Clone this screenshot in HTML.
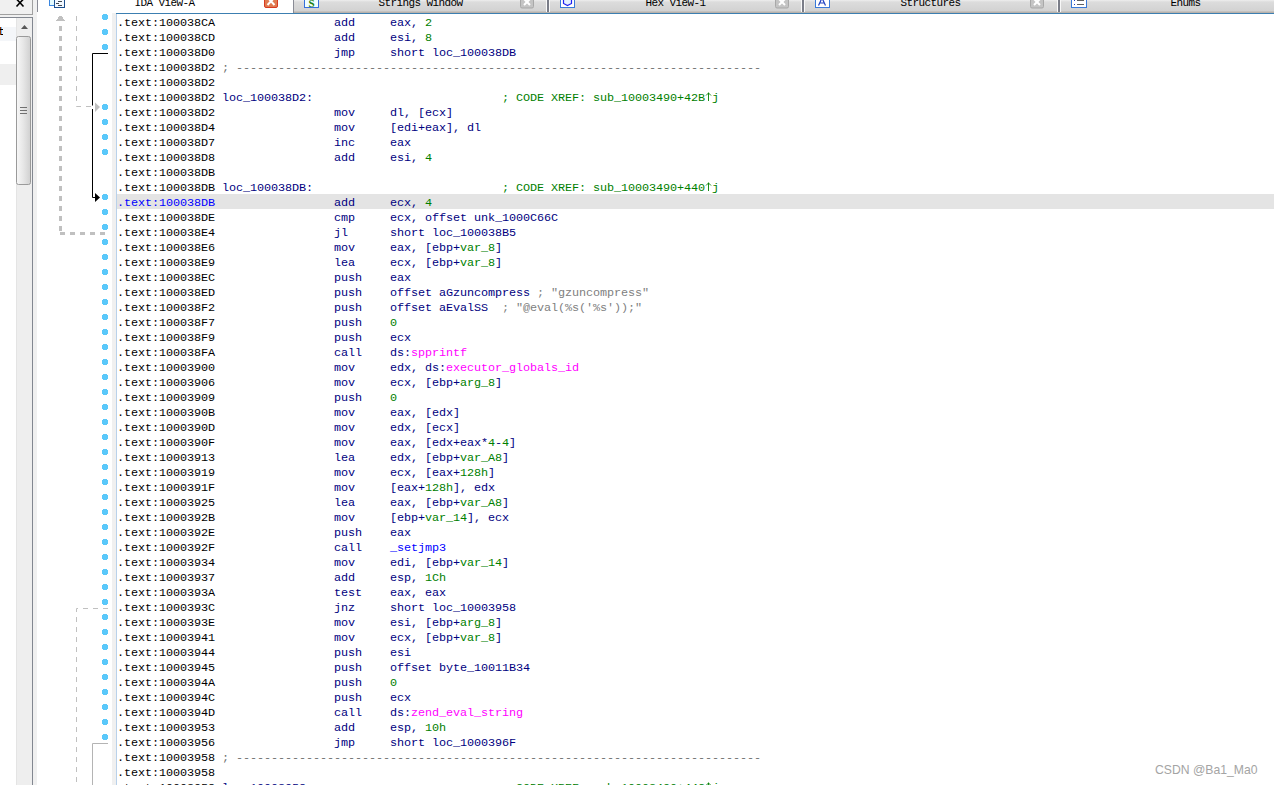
<!DOCTYPE html>
<html><head><meta charset="utf-8"><style>
html,body{margin:0;padding:0;width:1274px;height:785px;overflow:hidden;background:#fff;position:relative}
.abs{position:absolute}
#listing{position:absolute;left:117px;top:0;width:1157px;height:785px;overflow:hidden}
.row{position:absolute;left:0;height:15px;width:1157px;white-space:pre;font-family:"Liberation Mono",monospace;font-size:11.8px;letter-spacing:-0.08px;line-height:15px;color:#000;-webkit-text-stroke-width:0px}
.a{color:#000}
.ah{color:#0000ff}
.n{color:#000080}
.g{color:#008000}
.s{color:#808080}
.m{color:#ff00ff}
.b{color:#0000ff}
.sep{color:#707070}
.tab{position:absolute;top:0;height:13px;box-sizing:border-box;overflow:hidden}
.tabt{position:absolute;top:-4px;left:0;width:100%;text-align:center;font-family:"Liberation Mono",monospace;font-size:11px;letter-spacing:-0.6px;line-height:15px;color:#000}
</style></head><body>
<!-- left panel -->
<div class="abs" style="left:0;top:0;width:37px;height:785px;background:#f0f0f0"></div>
<div class="abs" style="left:0;top:0;width:32px;height:14px;border-right:1px solid #a0a0a0;border-bottom:1px solid #a0a0a0;background:#f0f0f0"></div>
<svg class="abs" style="left:0;top:0" width="32" height="14"><path d="M16.5 -1L23.5 6.5M23.5 -1L16.5 6.5" stroke="#000" stroke-width="1.6"/></svg>
<div class="abs" style="left:0;top:17px;width:32px;height:768px;border-top:1px solid #828790;border-right:1px solid #828790;background:#fff"></div>
<div class="abs" style="left:0;top:27px;width:16px;height:14px;background:#f4f6f9"></div>
<svg class="abs" style="left:0;top:27px" width="4" height="10"><rect x="0" y="0" width="1" height="8" fill="#9a3800"/><rect x="1" y="0" width="1" height="8" fill="#70b8ff"/><rect x="0" y="2" width="3" height="1" fill="#000"/><rect x="1" y="7" width="2" height="1" fill="#000"/></svg>
<div class="abs" style="left:0;top:64px;width:16px;height:21px;background:#efefef"></div>
<div class="abs" style="left:16px;top:18px;width:16px;height:767px;background:#eeeeee;border-left:1px solid #e4e4e4;box-sizing:border-box"></div>
<svg class="abs" style="left:16px;top:18px" width="16" height="170">
<path d="M5 11L8.5 7L12 11Z" fill="#585858"/>
<rect x="0.5" y="18.5" width="14" height="148" rx="2" fill="url(#thumb)" stroke="#9a9a9a"/>
<defs><linearGradient id="thumb" x1="0" x2="1" y1="0" y2="0"><stop offset="0" stop-color="#f8f8f8"/><stop offset="0.5" stop-color="#e6e6e6"/><stop offset="1" stop-color="#d0d0d0"/></linearGradient></defs>
<path d="M4 89.5h7M4 92.5h7M4 95.5h7" stroke="#707070" stroke-width="1"/>
</svg>
<!-- tabs -->
<div class="tab" style="left:37px;width:255px;background:#fff"><div class="tabt">IDA View-A</div></div>
<div class="tab" style="left:293px;width:255px;background:linear-gradient(#eeeeee 0px,#dcdcdc 2px,#d2d2d2 11px,#b8b2ac 12px,#b8b2ac 13px)"><div class="tabt">Strings window</div></div>
<div class="tab" style="left:548px;width:255px;background:linear-gradient(#eeeeee 0px,#dcdcdc 2px,#d2d2d2 11px,#b8b2ac 12px,#b8b2ac 13px)"><div class="tabt">Hex View-1</div></div>
<div class="tab" style="left:803px;width:255px;background:linear-gradient(#eeeeee 0px,#dcdcdc 2px,#d2d2d2 11px,#b8b2ac 12px,#b8b2ac 13px)"><div class="tabt">Structures</div></div>
<div class="tab" style="left:1058px;width:255px;background:linear-gradient(#eeeeee 0px,#dcdcdc 2px,#d2d2d2 11px,#b8b2ac 12px,#b8b2ac 13px)"><div class="tabt">Enums</div></div>
<div class="abs" style="left:37px;top:0;width:1px;height:12px;background:#8a8c96"></div>
<div class="abs" style="left:293px;top:0;width:1px;height:13px;background:#8a8c96"></div>
<div class="abs" style="left:546px;top:0;width:1px;height:12px;background:#fafafa"></div>
<div class="abs" style="left:547px;top:0;width:2px;height:12px;background:#7a7d88"></div>
<div class="abs" style="left:549px;top:0;width:1px;height:12px;background:#f8f8f8"></div>
<div class="abs" style="left:801px;top:0;width:1px;height:12px;background:#fafafa"></div>
<div class="abs" style="left:802px;top:0;width:2px;height:12px;background:#7a7d88"></div>
<div class="abs" style="left:804px;top:0;width:1px;height:12px;background:#f8f8f8"></div>
<div class="abs" style="left:1057px;top:0;width:1px;height:12px;background:#fafafa"></div>
<div class="abs" style="left:1058px;top:0;width:2px;height:12px;background:#7a7d88"></div>
<div class="abs" style="left:1060px;top:0;width:1px;height:12px;background:#f8f8f8"></div>
<!-- tab icons -->
<svg class="abs" style="left:0;top:0" width="1274" height="13">
<rect x="49.5" y="-3" width="6" height="8.5" fill="#e4fbff" stroke="#3a86e0"/>
<rect x="54.5" y="-3" width="10" height="10.5" fill="#f2f8ff" stroke="#1c4f8e"/>
<path d="M58 1.5h4M56 3.5h3M58 5.5h4" stroke="#404850"/>
<rect x="264.5" y="-3" width="13" height="10.5" rx="1.5" fill="#e07a50" stroke="#d83a20"/>
<path d="M267.5 -2.5L274.5 5M274.5 -2.5L267.5 5" stroke="#fff" stroke-width="2" fill="none"/>
<rect x="304.5" y="-3" width="14" height="10.5" fill="#f0feff" stroke="#3570dc"/>
<text x="311.5" y="6.5" text-anchor="middle" font-family="Liberation Serif" font-weight="bold" font-size="11" fill="#208010">S</text>
<rect x="520.5" y="-3" width="13" height="11" rx="1.5" fill="#c4c4c4" stroke="#a8a8a8"/>
<path d="M524 -1L530 5M530 -1L524 5" stroke="#fff" stroke-width="2"/>
<rect x="560.5" y="-3" width="14" height="10.5" fill="#fff" stroke="#3a7ad8"/>
<path d="M563.5 -2V3.5L567.5 5.5L571.5 3.5V-2" fill="#e4f0ff" stroke="#2020f0" stroke-width="1.2"/>
<rect x="775.5" y="-3" width="13" height="11" rx="1.5" fill="#c4c4c4" stroke="#a8a8a8"/>
<path d="M779 -1L785 5M785 -1L779 5" stroke="#fff" stroke-width="2"/>
<rect x="815.5" y="-3" width="14" height="10.5" fill="#fff" stroke="#3a7ad8"/>
<path d="M818.5 5.5L822 -2L825.5 5.5M819.5 3h5" stroke="#2040c0" stroke-width="1.2" fill="none"/>
<rect x="1030.5" y="-3" width="13" height="11" rx="1.5" fill="#c4c4c4" stroke="#a8a8a8"/>
<path d="M1034 -1L1040 5M1040 -1L1034 5" stroke="#fff" stroke-width="2"/>
<rect x="1071.5" y="-3" width="15" height="10.5" fill="#fff" stroke="#3a7ad8"/>
<path d="M1074 0.5h1M1074 4.5h1" stroke="#2040c0"/><path d="M1077 0.5h7M1077 4.5h7" stroke="#606060"/>
</svg>
<!-- arrow panel / listing frame -->
<div class="abs" style="left:37px;top:13px;width:75px;height:772px;background:#fff"></div>
<div class="abs" style="left:112px;top:13px;width:4px;height:772px;background:#f0f0f0"></div>
<div class="abs" style="left:116px;top:13px;width:1px;height:772px;background:#b9d1ea"></div>
<div class="abs" style="left:116px;top:13px;width:1158px;height:1px;background:#3c7fb1"></div>
<div class="abs" style="left:117px;top:194px;width:1157px;height:15px;background:#e4e4e4"></div>
<svg class="abs" style="left:0;top:0" width="1274" height="785" viewBox="0 0 1274 785">
<path d="M103 14h4v1h1v4h-1v1h-4v-1h-1v-4h1z" fill="#5ac8fa"/>
<path d="M103 29h4v1h1v4h-1v1h-4v-1h-1v-4h1z" fill="#5ac8fa"/>
<path d="M103 44h4v1h1v4h-1v1h-4v-1h-1v-4h1z" fill="#5ac8fa"/>
<path d="M103 104h4v1h1v4h-1v1h-4v-1h-1v-4h1z" fill="#5ac8fa"/>
<path d="M103 119h4v1h1v4h-1v1h-4v-1h-1v-4h1z" fill="#5ac8fa"/>
<path d="M103 134h4v1h1v4h-1v1h-4v-1h-1v-4h1z" fill="#5ac8fa"/>
<path d="M103 149h4v1h1v4h-1v1h-4v-1h-1v-4h1z" fill="#5ac8fa"/>
<path d="M103 194h4v1h1v4h-1v1h-4v-1h-1v-4h1z" fill="#5ac8fa"/>
<path d="M103 209h4v1h1v4h-1v1h-4v-1h-1v-4h1z" fill="#5ac8fa"/>
<path d="M103 224h4v1h1v4h-1v1h-4v-1h-1v-4h1z" fill="#5ac8fa"/>
<path d="M103 239h4v1h1v4h-1v1h-4v-1h-1v-4h1z" fill="#5ac8fa"/>
<path d="M103 254h4v1h1v4h-1v1h-4v-1h-1v-4h1z" fill="#5ac8fa"/>
<path d="M103 269h4v1h1v4h-1v1h-4v-1h-1v-4h1z" fill="#5ac8fa"/>
<path d="M103 284h4v1h1v4h-1v1h-4v-1h-1v-4h1z" fill="#5ac8fa"/>
<path d="M103 299h4v1h1v4h-1v1h-4v-1h-1v-4h1z" fill="#5ac8fa"/>
<path d="M103 314h4v1h1v4h-1v1h-4v-1h-1v-4h1z" fill="#5ac8fa"/>
<path d="M103 329h4v1h1v4h-1v1h-4v-1h-1v-4h1z" fill="#5ac8fa"/>
<path d="M103 344h4v1h1v4h-1v1h-4v-1h-1v-4h1z" fill="#5ac8fa"/>
<path d="M103 359h4v1h1v4h-1v1h-4v-1h-1v-4h1z" fill="#5ac8fa"/>
<path d="M103 374h4v1h1v4h-1v1h-4v-1h-1v-4h1z" fill="#5ac8fa"/>
<path d="M103 389h4v1h1v4h-1v1h-4v-1h-1v-4h1z" fill="#5ac8fa"/>
<path d="M103 404h4v1h1v4h-1v1h-4v-1h-1v-4h1z" fill="#5ac8fa"/>
<path d="M103 419h4v1h1v4h-1v1h-4v-1h-1v-4h1z" fill="#5ac8fa"/>
<path d="M103 434h4v1h1v4h-1v1h-4v-1h-1v-4h1z" fill="#5ac8fa"/>
<path d="M103 449h4v1h1v4h-1v1h-4v-1h-1v-4h1z" fill="#5ac8fa"/>
<path d="M103 464h4v1h1v4h-1v1h-4v-1h-1v-4h1z" fill="#5ac8fa"/>
<path d="M103 479h4v1h1v4h-1v1h-4v-1h-1v-4h1z" fill="#5ac8fa"/>
<path d="M103 494h4v1h1v4h-1v1h-4v-1h-1v-4h1z" fill="#5ac8fa"/>
<path d="M103 509h4v1h1v4h-1v1h-4v-1h-1v-4h1z" fill="#5ac8fa"/>
<path d="M103 524h4v1h1v4h-1v1h-4v-1h-1v-4h1z" fill="#5ac8fa"/>
<path d="M103 539h4v1h1v4h-1v1h-4v-1h-1v-4h1z" fill="#5ac8fa"/>
<path d="M103 554h4v1h1v4h-1v1h-4v-1h-1v-4h1z" fill="#5ac8fa"/>
<path d="M103 569h4v1h1v4h-1v1h-4v-1h-1v-4h1z" fill="#5ac8fa"/>
<path d="M103 584h4v1h1v4h-1v1h-4v-1h-1v-4h1z" fill="#5ac8fa"/>
<path d="M103 599h4v1h1v4h-1v1h-4v-1h-1v-4h1z" fill="#5ac8fa"/>
<path d="M103 614h4v1h1v4h-1v1h-4v-1h-1v-4h1z" fill="#5ac8fa"/>
<path d="M103 629h4v1h1v4h-1v1h-4v-1h-1v-4h1z" fill="#5ac8fa"/>
<path d="M103 644h4v1h1v4h-1v1h-4v-1h-1v-4h1z" fill="#5ac8fa"/>
<path d="M103 659h4v1h1v4h-1v1h-4v-1h-1v-4h1z" fill="#5ac8fa"/>
<path d="M103 674h4v1h1v4h-1v1h-4v-1h-1v-4h1z" fill="#5ac8fa"/>
<path d="M103 689h4v1h1v4h-1v1h-4v-1h-1v-4h1z" fill="#5ac8fa"/>
<path d="M103 704h4v1h1v4h-1v1h-4v-1h-1v-4h1z" fill="#5ac8fa"/>
<path d="M103 719h4v1h1v4h-1v1h-4v-1h-1v-4h1z" fill="#5ac8fa"/>
<path d="M103 734h4v1h1v4h-1v1h-4v-1h-1v-4h1z" fill="#5ac8fa"/>
<path d="M59 16h3v1h1v2h1v1h1v1h-9v-1h1v-1h1v-2h1z" fill="#c0c0c0"/>
<path d="M60.5 26V232" stroke="#c0c0c0" stroke-width="3" stroke-dasharray="5 5" fill="none"/>
<path d="M60 233.5H105" stroke="#c0c0c0" stroke-width="3" stroke-dasharray="5 5" fill="none"/>
<path d="M108 53.5H92.5V105.5M92.5 109V197.5H95" stroke="#000" stroke-width="1" fill="none"/>
<path d="M95 193L100 197.5L95 202Z" fill="#000"/>
<path d="M76.5 16V106.5H95" stroke="#c0c0c0" stroke-width="1" stroke-dasharray="5 5" fill="none"/>
<path d="M95 102.5L100 107L95 112Z" fill="#c0c0c0"/>
<path d="M108 608.5H76.5V785" stroke="#c0c0c0" stroke-width="1" stroke-dasharray="5 5" stroke-dashoffset="0" fill="none"/>
<path d="M108 743.5H92.5V785" stroke="#b4b4b4" stroke-width="1" fill="none"/>
<path d="M708.5 92.5V101M706 95.5L708.5 93L711 95.5" stroke="#008000" stroke-width="0.9" fill="none"/>
<path d="M708.5 182.5V191M706 185.5L708.5 183L711 185.5" stroke="#008000" stroke-width="0.9" fill="none"/>
<path d="M708.5 782.5V791M706 785.5L708.5 783L711 785.5" stroke="#008000" stroke-width="0.9" fill="none"/>
</svg>
<div id="listing">
<div class="row" style="top:16px"><span class="a">.text:100038CA</span>                 <span class="n">add</span>     <span class="n">eax, </span><span class="g">2</span></div>
<div class="row" style="top:31px"><span class="a">.text:100038CD</span>                 <span class="n">add</span>     <span class="n">esi, </span><span class="g">8</span></div>
<div class="row" style="top:46px"><span class="a">.text:100038D0</span>                 <span class="n">jmp</span>     <span class="n">short loc_100038DB</span></div>
<div class="row" style="top:61px"><span class="a">.text:100038D2</span> <span class="sep">; ---------------------------------------------------------------------------</span></div>
<div class="row" style="top:76px"><span class="a">.text:100038D2</span></div>
<div class="row" style="top:91px"><span class="a">.text:100038D2</span> <span class="n">loc_100038D2:</span>                           <span class="g">; CODE XREF: sub_10003490+42B j</span></div>
<div class="row" style="top:106px"><span class="a">.text:100038D2</span>                 <span class="n">mov</span>     <span class="n">dl, [ecx]</span></div>
<div class="row" style="top:121px"><span class="a">.text:100038D4</span>                 <span class="n">mov</span>     <span class="n">[edi+eax], dl</span></div>
<div class="row" style="top:136px"><span class="a">.text:100038D7</span>                 <span class="n">inc</span>     <span class="n">eax</span></div>
<div class="row" style="top:151px"><span class="a">.text:100038D8</span>                 <span class="n">add</span>     <span class="n">esi, </span><span class="g">4</span></div>
<div class="row" style="top:166px"><span class="a">.text:100038DB</span></div>
<div class="row" style="top:181px"><span class="a">.text:100038DB</span> <span class="n">loc_100038DB:</span>                           <span class="g">; CODE XREF: sub_10003490+440 j</span></div>
<div class="row" style="top:196px"><span class="ah">.text:100038DB</span>                 <span class="n">add</span>     <span class="n">ecx, </span><span class="g">4</span></div>
<div class="row" style="top:211px"><span class="a">.text:100038DE</span>                 <span class="n">cmp</span>     <span class="n">ecx, offset unk_1000C66C</span></div>
<div class="row" style="top:226px"><span class="a">.text:100038E4</span>                 <span class="n">jl</span>      <span class="n">short loc_100038B5</span></div>
<div class="row" style="top:241px"><span class="a">.text:100038E6</span>                 <span class="n">mov</span>     <span class="n">eax, [ebp+</span><span class="g">var_8</span><span class="n">]</span></div>
<div class="row" style="top:256px"><span class="a">.text:100038E9</span>                 <span class="n">lea</span>     <span class="n">ecx, [ebp+</span><span class="g">var_8</span><span class="n">]</span></div>
<div class="row" style="top:271px"><span class="a">.text:100038EC</span>                 <span class="n">push</span>    <span class="n">eax</span></div>
<div class="row" style="top:286px"><span class="a">.text:100038ED</span>                 <span class="n">push</span>    <span class="n">offset aGzuncompress </span><span class="s">; "gzuncompress"</span></div>
<div class="row" style="top:301px"><span class="a">.text:100038F2</span>                 <span class="n">push</span>    <span class="n">offset aEvalSS  </span><span class="s">; "@eval(%s('%s'));"</span></div>
<div class="row" style="top:316px"><span class="a">.text:100038F7</span>                 <span class="n">push</span>    <span class="g">0</span></div>
<div class="row" style="top:331px"><span class="a">.text:100038F9</span>                 <span class="n">push</span>    <span class="n">ecx</span></div>
<div class="row" style="top:346px"><span class="a">.text:100038FA</span>                 <span class="n">call</span>    <span class="n">ds:</span><span class="m">spprintf</span></div>
<div class="row" style="top:361px"><span class="a">.text:10003900</span>                 <span class="n">mov</span>     <span class="n">edx, ds:</span><span class="m">executor_globals_id</span></div>
<div class="row" style="top:376px"><span class="a">.text:10003906</span>                 <span class="n">mov</span>     <span class="n">ecx, [ebp+</span><span class="g">arg_8</span><span class="n">]</span></div>
<div class="row" style="top:391px"><span class="a">.text:10003909</span>                 <span class="n">push</span>    <span class="g">0</span></div>
<div class="row" style="top:406px"><span class="a">.text:1000390B</span>                 <span class="n">mov</span>     <span class="n">eax, [edx]</span></div>
<div class="row" style="top:421px"><span class="a">.text:1000390D</span>                 <span class="n">mov</span>     <span class="n">edx, [ecx]</span></div>
<div class="row" style="top:436px"><span class="a">.text:1000390F</span>                 <span class="n">mov</span>     <span class="n">eax, [edx+eax*</span><span class="g">4</span><span class="n">-</span><span class="g">4</span><span class="n">]</span></div>
<div class="row" style="top:451px"><span class="a">.text:10003913</span>                 <span class="n">lea</span>     <span class="n">edx, [ebp+</span><span class="g">var_A8</span><span class="n">]</span></div>
<div class="row" style="top:466px"><span class="a">.text:10003919</span>                 <span class="n">mov</span>     <span class="n">ecx, [eax+</span><span class="g">128h</span><span class="n">]</span></div>
<div class="row" style="top:481px"><span class="a">.text:1000391F</span>                 <span class="n">mov</span>     <span class="n">[eax+</span><span class="g">128h</span><span class="n">], edx</span></div>
<div class="row" style="top:496px"><span class="a">.text:10003925</span>                 <span class="n">lea</span>     <span class="n">eax, [ebp+</span><span class="g">var_A8</span><span class="n">]</span></div>
<div class="row" style="top:511px"><span class="a">.text:1000392B</span>                 <span class="n">mov</span>     <span class="n">[ebp+</span><span class="g">var_14</span><span class="n">], ecx</span></div>
<div class="row" style="top:526px"><span class="a">.text:1000392E</span>                 <span class="n">push</span>    <span class="n">eax</span></div>
<div class="row" style="top:541px"><span class="a">.text:1000392F</span>                 <span class="n">call</span>    <span class="b">_setjmp3</span></div>
<div class="row" style="top:556px"><span class="a">.text:10003934</span>                 <span class="n">mov</span>     <span class="n">edi, [ebp+</span><span class="g">var_14</span><span class="n">]</span></div>
<div class="row" style="top:571px"><span class="a">.text:10003937</span>                 <span class="n">add</span>     <span class="n">esp, </span><span class="g">1Ch</span></div>
<div class="row" style="top:586px"><span class="a">.text:1000393A</span>                 <span class="n">test</span>    <span class="n">eax, eax</span></div>
<div class="row" style="top:601px"><span class="a">.text:1000393C</span>                 <span class="n">jnz</span>     <span class="n">short loc_10003958</span></div>
<div class="row" style="top:616px"><span class="a">.text:1000393E</span>                 <span class="n">mov</span>     <span class="n">esi, [ebp+</span><span class="g">arg_8</span><span class="n">]</span></div>
<div class="row" style="top:631px"><span class="a">.text:10003941</span>                 <span class="n">mov</span>     <span class="n">ecx, [ebp+</span><span class="g">var_8</span><span class="n">]</span></div>
<div class="row" style="top:646px"><span class="a">.text:10003944</span>                 <span class="n">push</span>    <span class="n">esi</span></div>
<div class="row" style="top:661px"><span class="a">.text:10003945</span>                 <span class="n">push</span>    <span class="n">offset byte_10011B34</span></div>
<div class="row" style="top:676px"><span class="a">.text:1000394A</span>                 <span class="n">push</span>    <span class="g">0</span></div>
<div class="row" style="top:691px"><span class="a">.text:1000394C</span>                 <span class="n">push</span>    <span class="n">ecx</span></div>
<div class="row" style="top:706px"><span class="a">.text:1000394D</span>                 <span class="n">call</span>    <span class="n">ds:</span><span class="m">zend_eval_string</span></div>
<div class="row" style="top:721px"><span class="a">.text:10003953</span>                 <span class="n">add</span>     <span class="n">esp, </span><span class="g">10h</span></div>
<div class="row" style="top:736px"><span class="a">.text:10003956</span>                 <span class="n">jmp</span>     <span class="n">short loc_1000396F</span></div>
<div class="row" style="top:751px"><span class="a">.text:10003958</span> <span class="sep">; ---------------------------------------------------------------------------</span></div>
<div class="row" style="top:766px"><span class="a">.text:10003958</span></div>
<div class="row" style="top:781px"><span class="a">.text:10003958</span> <span class="n">loc_10003958:</span>                           <span class="g">; CODE XREF: sub_10003490+44C j</span></div>
</div>
<div class="abs" style="left:1155px;top:762px;font:12.2px 'Liberation Sans',sans-serif;line-height:16px;color:#a4a4a4;white-space:pre">CSDN @Ba1_Ma0</div>
</body></html>
